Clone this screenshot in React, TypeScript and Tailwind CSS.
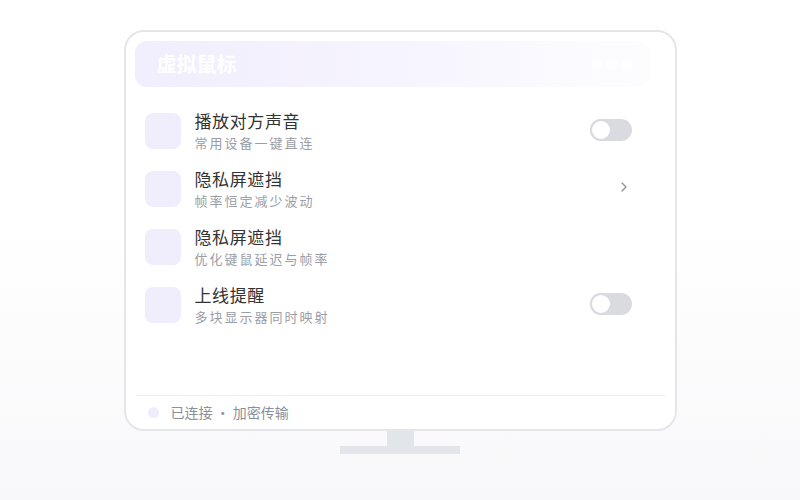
import React from 'react';

type Row = {
  title: string;
  sub: string;
  action: 'toggle' | 'chevron' | 'none';
};

const rows: Row[] = [
  { title: '播放对方声音', sub: '常用设备一键直连', action: 'toggle' },
  { title: '隐私屏遮挡', sub: '帧率恒定减少波动', action: 'chevron' },
  { title: '隐私屏遮挡', sub: '优化键鼠延迟与帧率', action: 'none' },
  { title: '上线提醒', sub: '多块显示器同时映射', action: 'toggle' },
];

const Toggle: React.FC = () => (
  <div className="w-[42px] h-[22px] rounded-full bg-[#d9dbe0] relative">
    <div className="absolute left-0 top-0 w-[22px] h-[22px] rounded-full bg-white border-2 border-[#d9dbe0]" />
  </div>
);

const App: React.FC = () => {
  return (
    <div
      className="w-[800px] h-[500px] flex flex-col items-center pt-[30px] bg-gradient-to-b from-white from-45% to-[#f8f8fa]"
      style={{ fontFamily: '"Noto Sans CJK SC", "Noto Sans", sans-serif' }}
    >
      {/* Screen */}
      <div className="w-[553px] h-[401px] border-2 border-[#e4e6ea] rounded-[20px] bg-white pt-[9px] px-[9px] flex flex-col">
        {/* Header */}
        <div className="w-[515px] h-[46px] rounded-[12px] bg-gradient-to-r from-[#f1eefd] via-[#f6f4fe] to-[#fdfdff] flex items-center justify-between pl-[22px] pr-[18px]">
          <span className="text-[20px] font-bold text-white leading-none">虚拟鼠标</span>
          <div className="flex gap-[4px] opacity-70">
            <div className="w-[11px] h-[11px] rounded-full bg-white" />
            <div className="w-[11px] h-[11px] rounded-full bg-white" />
            <div className="w-[11px] h-[11px] rounded-full bg-white" />
          </div>
        </div>

        {/* Rows */}
        <div className="mt-[26px] flex flex-col pl-[10px] pr-[34px]">
          {rows.map((r, i) => (
            <div key={i} className="h-[58px] flex items-start">
              <div className="w-[36px] h-[36px] rounded-[8px] bg-[#f0edfd] shrink-0" />
              <div className="ml-[14px] flex flex-col flex-1">
                <span className="text-[17px] leading-[20px] tracking-[0.6px] text-[#333333] -mt-[2px]">{r.title}</span>
                <span className="text-[13px] leading-[18px] tracking-[2px] text-[#9a9ea6] mt-[3px]">{r.sub}</span>
              </div>
              {r.action === 'toggle' && (
                <div className="mt-[6px]">
                  <Toggle />
                </div>
              )}
              {r.action === 'chevron' && (
                <div className="mt-[10px] mr-[4px]">
                  <svg width="8" height="12" viewBox="0 0 8 12" fill="none">
                    <path d="M2 2l4 4-4 4" stroke="#8a8f99" strokeWidth="1.3" strokeLinecap="round" strokeLinejoin="round" />
                  </svg>
                </div>
              )}
            </div>
          ))}
        </div>

        {/* Footer */}
        <div className="mt-auto border-t border-[#eef0f2] mx-[1px] h-[34px] flex items-center pl-[12px]">
          <div className="w-[11px] h-[11px] rounded-full bg-[#efecfd]" />
          <span className="ml-[12px] text-[14px] text-[#8a8f99]">已连接 · 加密传输</span>
        </div>
      </div>

      {/* Stand */}
      <div className="w-[27px] h-[15px] bg-[#e2e5e9]" />
      <div className="w-[120px] h-[8px] bg-[#e2e5e9]" />
    </div>
  );
};

export default App;
